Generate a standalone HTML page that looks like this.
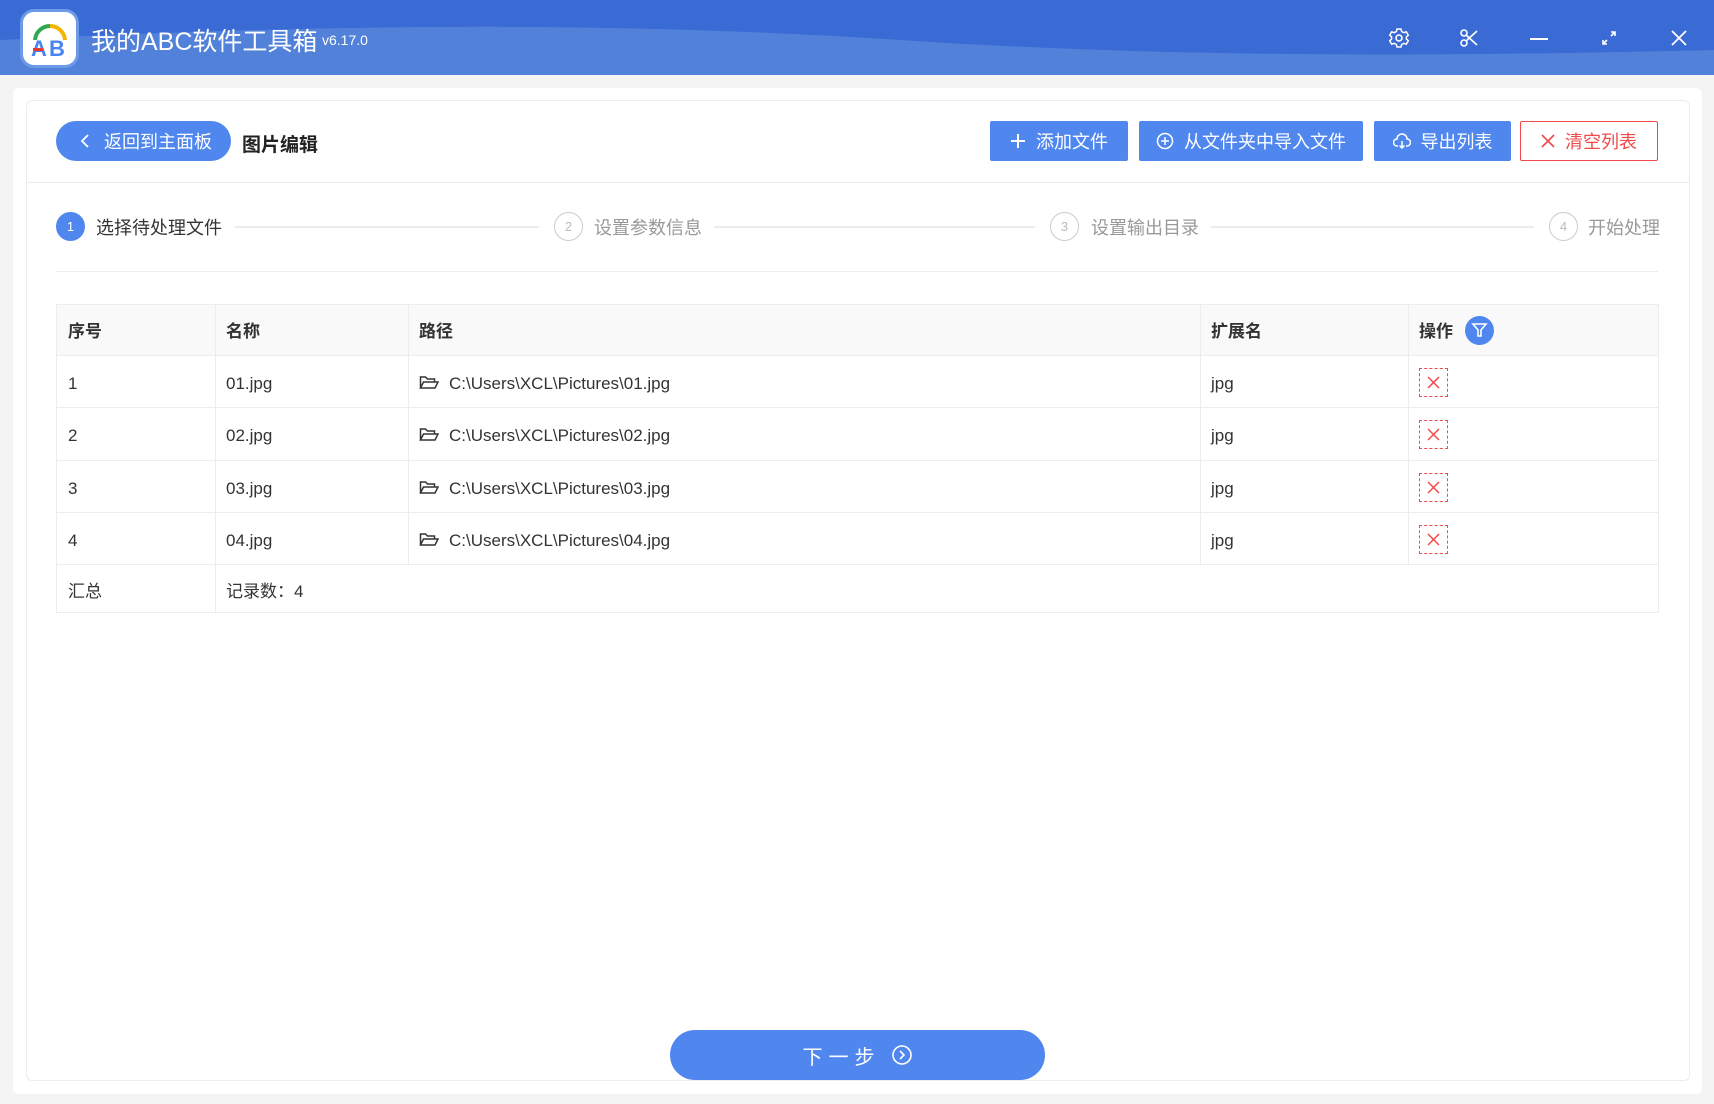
<!DOCTYPE html>
<html><head><meta charset="utf-8"><style>
*{box-sizing:border-box;margin:0;padding:0}
body{width:1714px;height:1104px;background:#f4f4f4;font-family:"Liberation Sans","Noto Sans CJK SC",sans-serif;position:relative;overflow:hidden;color:#333}
.abs{position:absolute}
.title{left:0;top:0;width:1714px;height:75px;background:#3a6ad4;overflow:hidden}
.btn{position:absolute;top:121px;height:40px;background:#4f87ef;color:#fff;font-size:18px;display:flex;align-items:center;justify-content:center;gap:10px;border-radius:2px}
.th{font-weight:bold;font-size:17px;color:#222}
.cell{position:absolute;font-size:17px;color:#333}
.vl{position:absolute;top:304px;height:308px;width:1px;background:#ececec}
.hl{position:absolute;left:56px;width:1602px;height:1px;background:#ececec}
.del{position:absolute;left:1419px;width:29px;height:29px;border:1px dashed #f04a4a}
.step{position:absolute;top:212px;width:29px;height:29px;border-radius:50%;border:1.5px solid #ccc;color:#bbb;font-size:13px;display:flex;align-items:center;justify-content:center}
.stxt{position:absolute;top:214px;font-size:18px;color:#999}
.sline{position:absolute;top:226px;height:2px;background:#ececec}
</style></head><body>
<div class="abs title">
<svg width="1714" height="75" style="position:absolute;left:0;top:0"><path d="M0 40 C300 25 600 20 900 40 C1200 60 1500 55 1714 50 L1714 75 L0 75Z" fill="#5181d9"/></svg>
<div class="abs" style="left:20px;top:9px;width:59px;height:59px;border-radius:14px;background:#fff;border:3px solid #6d9ae8">
<svg width="53" height="53" viewBox="0 0 53 53"><path d="M12 28 A15 15 0 0 1 27 14" stroke="#2fa84f" stroke-width="4" fill="none"/><path d="M27 14 A15 15 0 0 1 42 28" stroke="#f4b400" stroke-width="4" fill="none"/><text x="8" y="44" font-size="22" font-family="Liberation Sans" fill="#4a84f0" font-weight="bold">A</text><text x="26" y="44" font-size="22" font-family="Liberation Sans" fill="#4a84f0" font-weight="bold">B</text><rect x="10" y="36" width="10" height="3" fill="#e53935"/></svg></div>
<div class="abs" style="left:91px;top:22px;color:#fff;font-size:25px">我的ABC软件工具箱</div>
<div class="abs" style="left:322px;top:32px;color:#fff;font-size:14px">v6.17.0</div>
<svg class="abs" style="left:1388px;top:27px" width="22" height="22" viewBox="0 0 22 22"><circle cx="11" cy="11" r="3" stroke="#fff" stroke-width="1.6" fill="none"/><path d="M9 2h4l.6 2.5 2.3 1.2 2.4-.9 2 3.4-1.9 1.7v2.2l1.9 1.7-2 3.4-2.4-.9-2.3 1.2L13 20H9l-.6-2.5-2.3-1.2-2.4.9-2-3.4 1.9-1.7V9.9L1.7 8.2l2-3.4 2.4.9 2.3-1.2Z" stroke="#fff" stroke-width="1.5" fill="none"/></svg>
<svg class="abs" style="left:1459px;top:28px" width="20" height="20" viewBox="0 0 20 20"><circle cx="5" cy="15" r="3" stroke="#fff" stroke-width="1.6" fill="none"/><circle cx="5" cy="5" r="3" stroke="#fff" stroke-width="1.6" fill="none"/><path d="M7 7L18 17M7 13L18 3" stroke="#fff" stroke-width="1.6"/></svg>
<div class="abs" style="left:1530px;top:38px;width:18px;height:2px;background:#fff"></div>
<svg class="abs" style="left:1600px;top:29px" width="18" height="18" viewBox="0 0 18 18"><path d="M3 15L7 11M11 7L15 3M11 3h4v4M3 11v4h4" stroke="#fff" stroke-width="1.6" fill="none"/></svg>
<svg class="abs" style="left:1670px;top:29px" width="18" height="18"><path d="M2 2L16 16M16 2L2 16" stroke="#fff" stroke-width="1.8"/></svg>
</div>
<div class="abs" style="left:13px;top:88px;width:1689px;height:1006px;background:#fff;border-radius:6px"></div>
<div class="abs" style="left:26px;top:100px;width:1664px;height:981px;border:1px solid #ececec;border-radius:6px;background:#fff"></div>
<div class="abs" style="left:56px;top:121px;width:175px;height:40px;border-radius:20px;background:#4f87ef;color:#fff;font-size:18px;display:flex;align-items:center;padding-left:24px;gap:14px"><svg width="10" height="16"><path d="M8 2L2 8L8 14" stroke="#fff" stroke-width="1.8" fill="none"/></svg>返回到主面板</div>
<div class="abs" style="left:242px;top:130px;font-size:19px;font-weight:bold;color:#222">图片编辑</div>
<div class="btn" style="left:990px;width:138px"><svg width="16" height="16"><path d="M8 1v14M1 8h14" stroke="#fff" stroke-width="2"/></svg>添加文件</div>
<div class="btn" style="left:1139px;width:224px"><svg width="18" height="18"><circle cx="9" cy="9" r="7.5" stroke="#fff" stroke-width="1.5" fill="none"/><path d="M9 5v8M5 9h8" stroke="#fff" stroke-width="1.5"/></svg>从文件夹中导入文件</div>
<div class="btn" style="left:1374px;width:137px"><svg width="18" height="16"><path d="M5 13H4a3.5 3.5 0 0 1 0-7 5 5 0 0 1 10 0 3.5 3.5 0 0 1 0 7h-1M9 8v7M6.5 12.5L9 15l2.5-2.5" stroke="#fff" stroke-width="1.5" fill="none"/></svg>导出列表</div>
<div class="btn" style="left:1520px;width:138px;background:#fff;border:1px solid #f04a4a;color:#f04a4a"><svg width="14" height="14"><path d="M1 1L13 13M13 1L1 13" stroke="#f04a4a" stroke-width="1.6"/></svg>清空列表</div>
<div class="abs" style="left:27px;top:182px;width:1662px;height:1px;background:#ececec"></div>
<div class="step" style="left:56px;background:#4f87ef;border-color:#4f87ef;color:#fff">1</div>
<div class="stxt" style="left:96px;color:#333">选择待处理文件</div>
<div class="sline" style="left:235px;width:304px"></div>
<div class="step" style="left:554px">2</div><div class="stxt" style="left:594px">设置参数信息</div>
<div class="sline" style="left:714px;width:321px"></div>
<div class="step" style="left:1050px">3</div><div class="stxt" style="left:1091px">设置输出目录</div>
<div class="sline" style="left:1211px;width:323px"></div>
<div class="step" style="left:1549px">4</div><div class="stxt" style="left:1588px">开始处理</div>
<div class="abs" style="left:56px;top:271px;width:1602px;height:1px;background:#ececec"></div>
<div class="abs" style="left:56px;top:304px;width:1603px;height:309px;border:1px solid #ececec"></div>
<div class="abs" style="left:57px;top:305px;width:1601px;height:50px;background:#f9f9f9"></div>
<div class="vl" style="left:215px"></div><div class="vl" style="left:408px;height:260px"></div><div class="vl" style="left:1200px;height:260px"></div><div class="vl" style="left:1408px;height:260px"></div>
<div class="hl" style="top:355px"></div><div class="hl" style="top:407px"></div><div class="hl" style="top:460px"></div><div class="hl" style="top:512px"></div><div class="hl" style="top:564px"></div>
<div class="cell th" style="left:68px;top:317px">序号</div><div class="cell th" style="left:226px;top:317px">名称</div><div class="cell th" style="left:419px;top:317px">路径</div><div class="cell th" style="left:1211px;top:317px">扩展名</div><div class="cell th" style="left:1419px;top:317px">操作</div>
<div class="abs" style="left:1465px;top:316px;width:29px;height:29px;border-radius:50%;background:#4f87ef"><svg width="29" height="29"><path d="M8 8h13l-5 6v6h-3v-6Z" stroke="#fff" stroke-width="1.6" fill="none"/></svg></div>
<div class="cell" style="left:68px;top:374px">1</div><div class="cell" style="left:226px;top:374px">01.jpg</div><div class="cell" style="left:449px;top:374px">C:\Users\XCL\Pictures\01.jpg</div><div class="cell" style="left:1211px;top:374px">jpg</div>
<div class="cell" style="left:68px;top:426px">2</div><div class="cell" style="left:226px;top:426px">02.jpg</div><div class="cell" style="left:449px;top:426px">C:\Users\XCL\Pictures\02.jpg</div><div class="cell" style="left:1211px;top:426px">jpg</div>
<div class="cell" style="left:68px;top:479px">3</div><div class="cell" style="left:226px;top:479px">03.jpg</div><div class="cell" style="left:449px;top:479px">C:\Users\XCL\Pictures\03.jpg</div><div class="cell" style="left:1211px;top:479px">jpg</div>
<div class="cell" style="left:68px;top:531px">4</div><div class="cell" style="left:226px;top:531px">04.jpg</div><div class="cell" style="left:449px;top:531px">C:\Users\XCL\Pictures\04.jpg</div><div class="cell" style="left:1211px;top:531px">jpg</div>
<div class="cell" style="left:68px;top:577px">汇总</div><div class="cell" style="left:226px;top:577px">记录数：4</div>
<svg class="abs" style="left:419px;top:374px" width="20" height="180"><g stroke="#333" stroke-width="1.5" fill="none">
<path d="M1.5 14V3h5l2 2h7v3M1.5 14l3-6H19l-3 6Z"/>
<path transform="translate(0,52)" d="M1.5 14V3h5l2 2h7v3M1.5 14l3-6H19l-3 6Z"/>
<path transform="translate(0,105)" d="M1.5 14V3h5l2 2h7v3M1.5 14l3-6H19l-3 6Z"/>
<path transform="translate(0,157)" d="M1.5 14V3h5l2 2h7v3M1.5 14l3-6H19l-3 6Z"/></g></svg>
<div class="del" style="top:368px"></div><div class="del" style="top:420px"></div><div class="del" style="top:473px"></div><div class="del" style="top:525px"></div>
<svg class="abs" style="left:1419px;top:368px" width="29" height="190"><g stroke="#f04a4a" stroke-width="1.5">
<path d="M9 9l11 11M20 9L9 20"/>
<path transform="translate(0,52)" d="M9 9l11 11M20 9L9 20"/>
<path transform="translate(0,105)" d="M9 9l11 11M20 9L9 20"/>
<path transform="translate(0,157)" d="M9 9l11 11M20 9L9 20"/></g></svg>
<div class="abs" style="left:670px;top:1030px;width:375px;height:50px;border-radius:25px;background:#4f87ef;color:#fff;font-size:20px;display:flex;align-items:center;justify-content:center;gap:10px;letter-spacing:6px">下一步<svg width="22" height="22"><circle cx="11" cy="11" r="9" stroke="#fff" stroke-width="1.6" fill="none"/><path d="M9 7l4 4-4 4" stroke="#fff" stroke-width="1.6" fill="none"/></svg></div>
</body></html>
